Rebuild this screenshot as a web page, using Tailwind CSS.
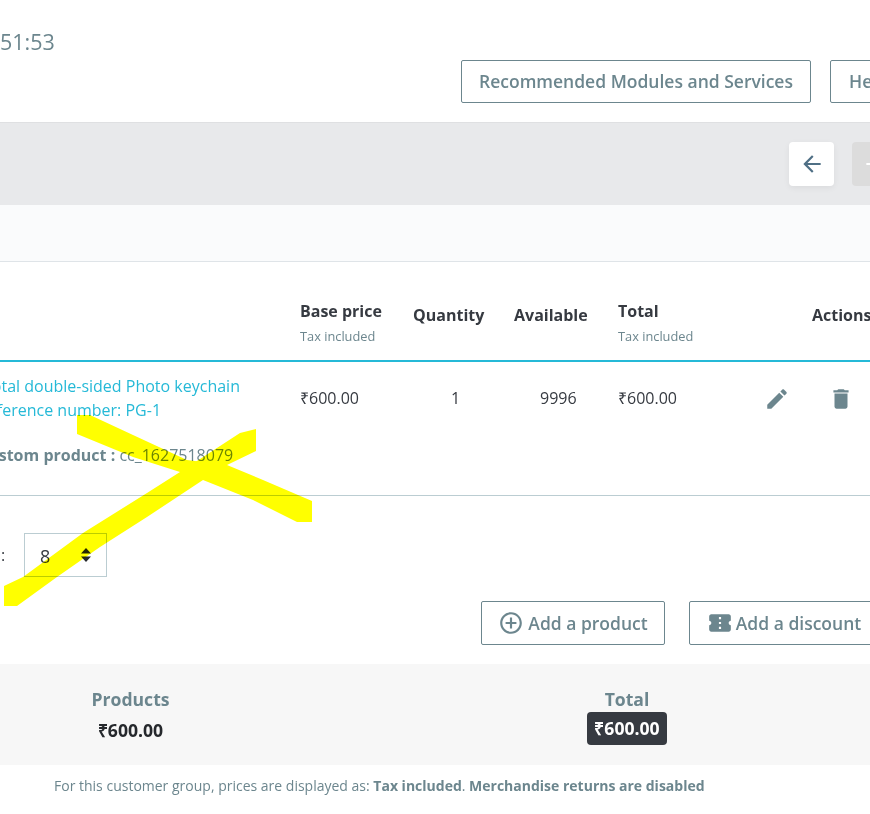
<!DOCTYPE html>
<html>
<head>
<meta charset="utf-8">
<script src="https://cdn.jsdelivr.net/npm/@tailwindcss/browser@4"></script>
</head>
<body class="bg-white font-['Open_Sans',sans-serif] text-[#363a41]">
<div class="relative w-[870px] h-[814px] overflow-hidden bg-white">
  <header class="h-[122px] relative">
    <div class="pt-[29px] text-[21.5px] leading-[26px] text-[#6c868e]">51:53</div>
    <div class="flex gap-[19px] pl-[461px] mt-[5px] w-[1000px]">
      <button class="h-[43px] w-[350px] shrink-0 border border-[#6c868e] rounded-[2px] text-[#6c868e] text-[17.5px] font-semibold text-center">Recommended Modules and Services</button>
      <button class="h-[43px] w-[120px] shrink-0 border border-[#6c868e] rounded-[2px] text-[#6c868e] text-[17.5px] font-semibold text-left pl-[18px]">Help</button>
    </div>
  </header>

  <section class="h-[83px] bg-[#e8e9eb] border-t border-[#dfe0e2] flex items-center gap-[18px] pl-[789px] w-[1000px]">
    <div class="w-[45px] h-[44px] shrink-0 rounded-[4px] bg-white shadow-[0_2px_6px_rgba(0,0,0,0.06)] flex items-center justify-center">
      <svg class="w-[26px] h-[26px] fill-[#4f6f85]" viewBox="0 0 24 24"><path d="M20 11H7.83l5.59-5.59L12 4l-8 8 8 8 1.41-1.41L7.83 13H20v-2z"/></svg>
    </div>
    <div class="w-[45px] h-[44px] shrink-0 rounded-[4px] bg-[#dcdcdc] flex items-center justify-center">
      <svg class="w-[26px] h-[26px] fill-white" viewBox="0 0 24 24"><path d="M12 4l-1.41 1.41L16.17 11H4v2h12.17l-5.58 5.59L12 20l8-8z"/></svg>
    </div>
  </section>

  <section class="h-[57px] bg-[#fafbfc] border-b border-[#dfe4e8]"></section>

  <section class="grid grid-cols-[300px_113px_101px_104px_194px_100px]">
    <div class="h-[98px]"></div>
    <div class="pt-[39px] text-[16px] font-bold leading-[20px]">Base price<div class="mt-[7px] text-[12.8px] font-normal leading-[16px] text-[#6c868e]">Tax included</div></div>
    <div class="pt-[43px] text-[16px] font-bold leading-[20px]">Quantity</div>
    <div class="pt-[43px] text-[16px] font-bold leading-[20px]">Available</div>
    <div class="pt-[39px] text-[16px] font-bold leading-[20px]">Total<div class="mt-[7px] text-[12.8px] font-normal leading-[16px] text-[#6c868e]">Tax included</div></div>
    <div class="pt-[43px] text-[16px] font-bold leading-[20px]">Actions</div>
  </section>

  <section class="h-[135px] border-t-2 border-[#25b9d7] grid grid-cols-[300px_113px_101px_104px_146px_64px_50px]">
    <div class="pt-[12px] -ml-[17px] text-[16px] whitespace-nowrap">
      <div class="text-[#25b9d7] leading-[24px]">Total double-sided Photo keychain</div>
      <div class="-ml-[5px] text-[#25b9d7] leading-[24px]">Reference number: PG-1</div>
      <div class="mt-[21px] -ml-[5px] leading-[24px] text-[#6c868e]"><span class="font-bold">Custom product :</span> cc_1627518079</div>
    </div>
    <div class="pt-[24px] text-[16px] leading-[24px]">₹600.00</div>
    <div class="pt-[24px] text-[16px] leading-[24px] pl-[38px]">1</div>
    <div class="pt-[24px] text-[16px] leading-[24px] pl-[26px]">9996</div>
    <div class="pt-[24px] text-[16px] leading-[24px]">₹600.00</div>
    <div class="pt-[24px]"><svg class="w-[26px] h-[26px] fill-[#6c868e]" viewBox="0 0 24 24"><path d="M3 17.25V21h3.75L17.81 9.94l-3.75-3.75L3 17.25zM20.71 7.04c.39-.39.39-1.02 0-1.41l-2.34-2.34c-.39-.39-1.02-.39-1.41 0l-1.83 1.83 3.75 3.75 1.83-1.83z"/></svg></div>
    <div class="pt-[24px]"><svg class="w-[26px] h-[26px] fill-[#6c868e]" viewBox="0 0 24 24"><path d="M6 19c0 1.1.9 2 2 2h8c1.1 0 2-.9 2-2V7H6v12zM19 4h-3.5l-1-1h-5l-1 1H5v2h14V4z"/></svg></div>
  </section>

  <section class="h-[169px] border-t border-[#bbcdd2]">
    <div class="flex items-center pt-[37px] text-[16px] h-[81px]">
      <span class="w-[24px] pl-[1px] -mt-[1px]">:</span>
      <div class="w-[83px] h-[44px] border border-[#bbcdd2] flex items-center justify-between pl-[15px] pr-[14px]">
        <span class="text-[18px] leading-[24px] pt-[1px]">8</span>
        <svg class="w-[12px] h-[14px] fill-[#25282c]" viewBox="0 0 12 14"><path d="M6 0l5 5.5H1zM6 14l5-5.5H1z"/></svg>
      </div>
    </div>
    <div class="flex gap-[24px] pl-[481px] mt-[24px] w-[1000px] text-[17.5px] font-semibold text-[#6c868e]">
      <div class="h-[44px] w-[184px] shrink-0 border border-[#6c868e] rounded-[2px] flex items-center justify-center gap-[4px]">
        <svg class="w-[26px] h-[26px] fill-[#6c868e]" viewBox="0 0 24 24"><path d="M13 7h-2v4H7v2h4v4h2v-4h4v-2h-4V7zm-1-5C6.48 2 2 6.48 2 12s4.48 10 10 10 10-4.48 10-10S17.52 2 12 2zm0 18c-4.41 0-8-3.59-8-8s3.59-8 8-8 8 3.59 8 8-3.59 8-8 8z"/></svg>
        <span>Add a product</span>
      </div>
      <div class="h-[44px] w-[190px] shrink-0 border border-[#6c868e] rounded-[2px] flex items-center justify-center gap-[3px]">
        <svg class="w-[26px] h-[26px] fill-[#6c868e]" viewBox="0 0 24 24"><path d="M22 10V6c0-1.11-.9-2-2-2H4c-1.1 0-1.99.89-1.99 2v4c1.1 0 1.99.9 1.99 2s-.89 2-2 2v4c0 1.1.9 2 2 2h16c1.1 0 2-.9 2-2v-4c-1.1 0-2-.9-2-2s.9-2 2-2zm-9 7.5h-2v-2h2v2zm0-4.5h-2v-2h2v2zm0-4.5h-2v-2h2v2z"/></svg>
        <span>Add a discount</span>
      </div>
    </div>
  </section>

  <section class="h-[101px] bg-[#f7f7f7] relative flex font-bold text-[17.6px] w-[1000px]">
    <div class="w-[261px] shrink-0 text-center pt-[22px]">
      <div class="leading-[26px] text-[#6c868e]">Products</div>
      <div class="leading-[26px] mt-[5px] text-[#25282c]">₹600.00</div>
    </div>
    <div class="w-[732px] shrink-0 text-center pt-[22px]">
      <div class="leading-[26px] text-[#6c868e]">Total</div>
      <div class="inline-block h-[33px] leading-[33px] px-[7px] rounded-[4px] bg-[#363a41] text-white">₹600.00</div>
    </div>
  </section>

  <footer class="pl-[54px] pt-[11px] text-[14px] leading-[20px] text-[#6c868e] whitespace-nowrap">For this customer group, prices are displayed as: <b>Tax included</b>. <b>Merchandise returns are disabled</b></footer>

  <svg class="absolute left-0 top-0 w-[870px] h-[814px] mix-blend-multiply pointer-events-none" viewBox="0 0 870 814">
    <path fill="#ffff00" d="M77 415L90 415L133 435L187 460L227 465L263 480L312 501L312 522L297 522L253 500L203 480L147 517L100 547L57 577L17 606L4 606L4 586L23 577L83 533L147 493L180 472L133 457L77 434Z"/>
    <path fill="#ffff00" d="M180 472L240 433L256 429L256 451L227 465L203 480Z"/>
  </svg>
</div>
</body>
</html>
